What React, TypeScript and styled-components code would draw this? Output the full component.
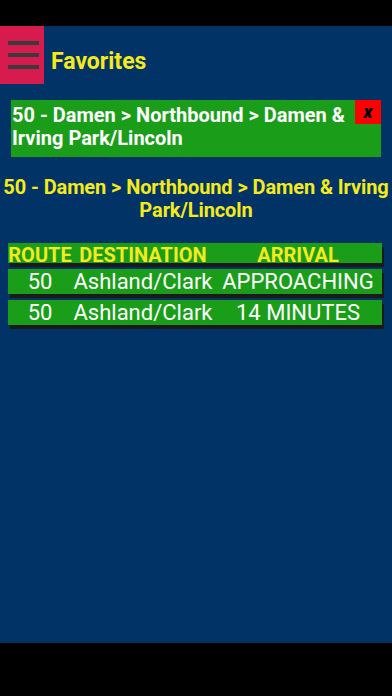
import React from "react";
import styled, { createGlobalStyle } from "styled-components";

const Global = createGlobalStyle`
  html, body { margin: 0; padding: 0; background: #000; }
  body { font-family: Roboto, "Noto Sans", Arial, sans-serif; }
  * { box-sizing: border-box; }
`;

const Screen = styled.div`
  width: 392px;
  height: 696px;
  background: #000;
  display: flex;
  flex-direction: column;
`;

const StatusBar = styled.div`
  height: 26px;
  flex: none;
  background: #000;
`;

const Body = styled.div`
  height: 617px;
  flex: none;
  background: #023366;
  display: flex;
  flex-direction: column;
`;

const Toolbar = styled.div`
  height: 58px;
  display: flex;
  align-items: center;
`;

const MenuButton = styled.button`
  width: 44px;
  height: 58px;
  border: none;
  padding: 0 0 0 8px;
  background: #d81b4f;
  display: flex;
  flex-direction: column;
  justify-content: center;
  gap: 8px;
`;

const MenuBar = styled.span`
  display: block;
  width: 31px;
  height: 4px;
  background: #3b3b3b;
`;

const Title = styled.h1`
  margin: 0 0 0 7px;
  color: #f4ea1c;
  font-size: 23px;
  font-weight: 700;
  line-height: 26px;
  padding-top: 13px;
`;

const FavCard = styled.div`
  margin: 16px 11px 0 11px;
  background: #1a9e1a;
  position: relative;
  padding: 4px 30px 7px 1px;
  color: #fff;
  font-size: 20px;
  font-weight: 700;
  line-height: 23px;
  min-height: 57px;
`;

const CloseBox = styled.div`
  position: absolute;
  top: 0;
  right: 0;
  width: 26px;
  height: 24px;
  background: #f00;
  color: #000;
  font-size: 18px;
  font-weight: 900;
  font-style: italic;
  display: flex;
  align-items: center;
  justify-content: center;
  line-height: 1;
`;

const StopTitle = styled.div`
  margin-top: 19px;
  text-align: center;
  color: #f4ea1c;
  font-size: 20px;
  font-weight: 700;
  line-height: 23px;
  letter-spacing: -0.1px;
  padding: 0;
`;

const Table = styled.div`
  margin: 21px 10px 0 8px;
  display: flex;
  flex-direction: column;
  gap: 6px;
`;

const Row = styled.div<{ $header?: boolean }>`
  display: grid;
  grid-template-columns: 64px 142px 1fr;
  align-items: center;
  height: ${(p) => (p.$header ? "20px" : "25px")};
  background: #1a9e1a;
  box-shadow: 2px 4px 0 #1a1a1a;
  color: ${(p) => (p.$header ? "#f4ea1c" : "#fff")};
  font-size: ${(p) => (p.$header ? "20px" : "22px")};
  font-weight: ${(p) => (p.$header ? 700 : 400)};
  white-space: nowrap;
`;

const Cell = styled.div`
  text-align: center;
  overflow: visible;
  display: flex;
  justify-content: center;
`;

export default function App() {
  const rows = [
    ["50", "Ashland/Clark", "APPROACHING"],
    ["50", "Ashland/Clark", "14 MINUTES"],
  ];
  return (
    <>
      <Global />
      <Screen>
        <StatusBar />
        <Body>
          <Toolbar>
            <MenuButton aria-label="menu">
              <MenuBar />
              <MenuBar />
              <MenuBar />
            </MenuButton>
            <Title>Favorites</Title>
          </Toolbar>
          <FavCard>
            50 - Damen &gt; Northbound &gt; Damen &amp; Irving Park/Lincoln
            <CloseBox>x</CloseBox>
          </FavCard>
          <StopTitle>
            50 - Damen &gt; Northbound &gt; Damen &amp; Irving Park/Lincoln
          </StopTitle>
          <Table>
            <Row $header>
              <Cell>ROUTE</Cell>
              <Cell>DESTINATION</Cell>
              <Cell>ARRIVAL</Cell>
            </Row>
            {rows.map((r, i) => (
              <Row key={i}>
                {r.map((c, j) => (
                  <Cell key={j}>{c}</Cell>
                ))}
              </Row>
            ))}
          </Table>
        </Body>
      </Screen>
    </>
  );
}
